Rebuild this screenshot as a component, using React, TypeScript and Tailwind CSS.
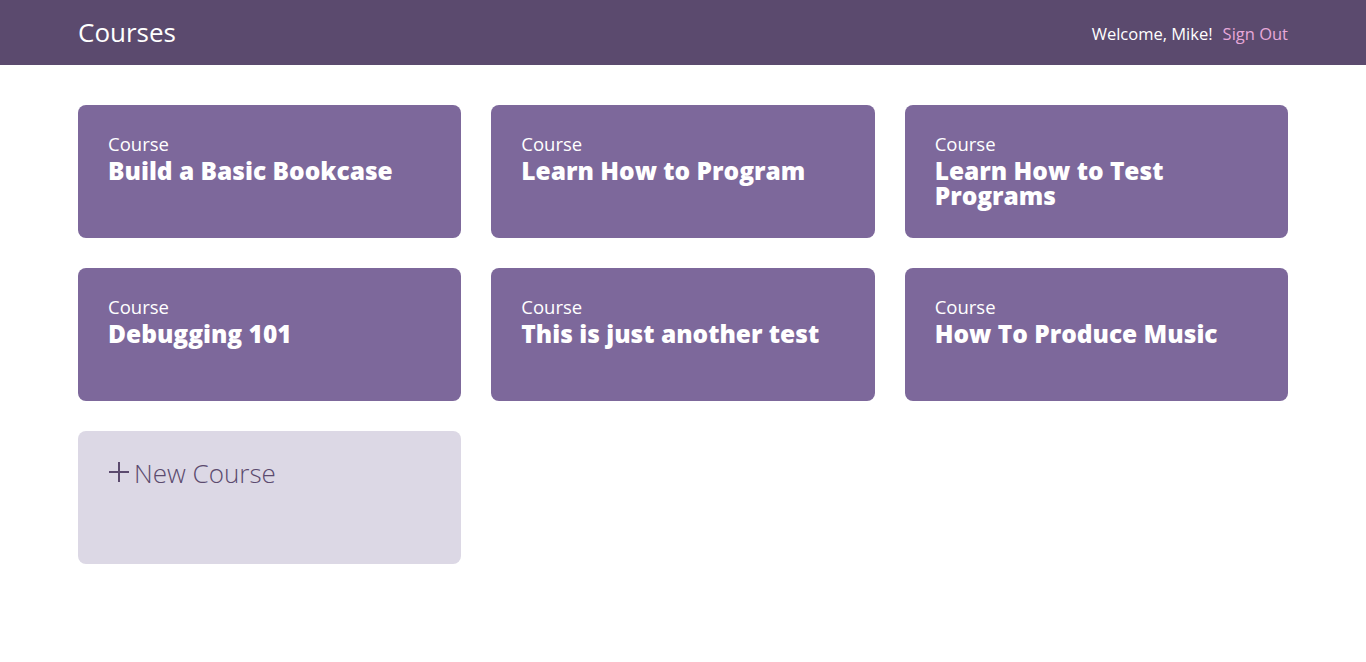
const courses = [
  "Build a Basic Bookcase",
  "Learn How to Program",
  "Learn How to Test Programs",
  "Debugging 101",
  "This is just another test",
  "How To Produce Music",
];

export default function App() {
  return (
    <div className="min-h-screen bg-white font-['Open_Sans',sans-serif]">
      <header className="bg-[#5b4a6e] h-[65px]">
        <div className="mx-[78px] h-full flex items-center justify-between">
          <h1 className="text-[26px] text-white font-normal">Courses</h1>
          <div className="flex items-center gap-[10px] text-[16.5px] mt-[3px]">
            <span className="text-white">Welcome, Mike!</span>
            <a href="#" className="text-[#e7a8d9]">
              Sign Out
            </a>
          </div>
        </div>
      </header>

      <main className="mx-[78px] mt-[40px] grid grid-cols-3 gap-[30px]">
        {courses.map((title) => (
          <a
            key={title}
            href="#"
            className="h-[133px] rounded-[8px] bg-[#7d689b] px-[30px] pt-[28px] text-white"
          >
            <div className="text-[18.5px] leading-[22px]">Course</div>
            <div className="text-[24.5px] leading-[25px] font-extrabold mt-[3px]">
              {title}
            </div>
          </a>
        ))}
        <a
          href="#"
          className="h-[133px] rounded-[8px] bg-[#dcd8e5] px-[30px] pt-[27px] text-[#5b4a6e] flex items-start"
        >
          <span className="flex items-center gap-[4px] text-[26px] font-light leading-[30px]">
            <svg width="22" height="22" viewBox="0 0 22 22" className="mt-[-2px]">
              <path d="M11 1v20M1 11h20" stroke="#5b4a6e" strokeWidth="2" />
            </svg>
            New Course
          </span>
        </a>
      </main>
    </div>
  );
}
